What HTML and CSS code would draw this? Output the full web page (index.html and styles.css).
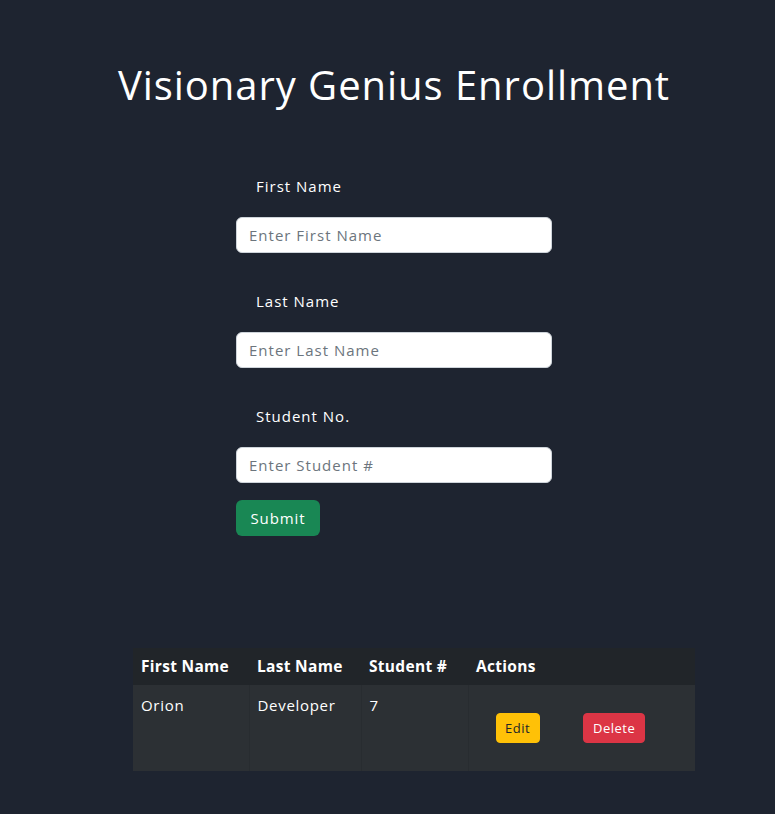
FILE: index.html
```html
<!DOCTYPE html>
<html lang="en">
<head>
<meta charset="utf-8">
<title>Visionary Genius Enrollment</title>
<link rel="stylesheet" href="styles.css">
</head>
<body>
<main class="page">
  <h1 class="title">Visionary Genius Enrollment</h1>
  <form class="form">
    <label class="label" for="fn">First Name</label>
    <input class="input" id="fn" type="text" placeholder="Enter First Name">
    <label class="label" for="ln">Last Name</label>
    <input class="input" id="ln" type="text" placeholder="Enter Last Name">
    <label class="label" for="sn">Student No.</label>
    <input class="input input-last" id="sn" type="text" placeholder="Enter Student #">
    <button class="btn btn-submit" type="button">Submit</button>
  </form>
  <table class="table">
    <thead>
      <tr>
        <th class="col1">First Name</th>
        <th class="col2">Last Name</th>
        <th class="col3">Student #</th>
        <th class="col4">Actions</th>
      </tr>
    </thead>
    <tbody>
      <tr>
        <td>Orion</td>
        <td>Developer</td>
        <td>7</td>
        <td class="actions"><button class="btn btn-sm btn-edit" type="button">Edit</button> <button class="btn btn-sm btn-delete" type="button">Delete</button></td>
      </tr>
    </tbody>
  </table>
</main>
</body>
</html>
```
FILE: styles.css
```css
* { box-sizing: border-box; }
html, body { margin: 0; padding: 0; }
body {
  background: #1e2430;
  color: #ffffff;
  font-family: "Open Sans", "DejaVu Sans", sans-serif;
  font-size: 16px;
  line-height: 1.5;
  min-height: 814px;
}
.page {
  display: flex;
  flex-direction: column;
  padding-top: 61px;
}
.title {
  margin: 0;
  font-size: 40px;
  font-weight: 400;
  line-height: 48px;
  text-align: center;
  padding-left: 13px;
  letter-spacing: 0.95px;
}
.form {
  display: flex;
  flex-direction: column;
  align-items: flex-start;
  width: 316px;
  margin: 65px 0 0 236px;
}
.label {
  display: block;
  padding-left: 20px;
  font-size: 15px;
  line-height: 24px;
  margin-bottom: 19px;
  letter-spacing: 1px;
}
.input {
  width: 316px;
  height: 36px;
  border: 1px solid #ced4da;
  border-radius: 6px;
  padding: 6px 12px;
  font-family: inherit;
  font-size: 15px;
  color: #212529;
  background: #fff;
  margin-bottom: 36px;
  letter-spacing: 1px;
}
.input::placeholder { color: #6c757d; opacity: 1; }
.input-last { margin-bottom: 17px; }
.btn {
  font-family: inherit;
  border: 1px solid transparent;
  border-radius: 6px;
  cursor: pointer;
}
.btn-submit {
  background: #198754;
  color: #fff;
  font-size: 15px;
  line-height: 24px;
  padding: 5px 12px;
  height: 36px;
  width: 84px;
  letter-spacing: 0.9px;
}
.table {
  margin: 112px 0 0 133px;
  width: 562px;
  border-collapse: collapse;
  color: #fff;
}
.table th {
  background: #212529;
  text-align: left;
  font-weight: 700;
  padding: 6px 8px 7px;
  line-height: 24px;
  font-size: 15.5px;
  letter-spacing: 0.3px;
}
.table td {
  background: #2c3034;
  vertical-align: top;
  padding: 8px;
  line-height: 24px;
  font-size: 15px;
  border-left: 1px solid #282c30;
  letter-spacing: 0.7px;
}
.table td:first-child { border-left: none; }
.col1 { width: 116px; }
.col2 { width: 112px; }
.col3 { width: 107px; }
.actions { white-space: nowrap; }
.btn-sm {
  font-size: 13px;
  line-height: 20px;
  padding: 4px 6px;
  height: 30px;
  margin: 20px;
  border-radius: 4px;
  vertical-align: top;
  letter-spacing: 0.5px;
}
.btn-edit { background: #ffc107; border-color: #ffc107; color: #212529; margin-left: 19px; margin-right: 20px; width: 44px; }
.btn-delete { background: #dc3545; border-color: #dc3545; color: #fff; margin-left: 19px; width: 62px; }
```
